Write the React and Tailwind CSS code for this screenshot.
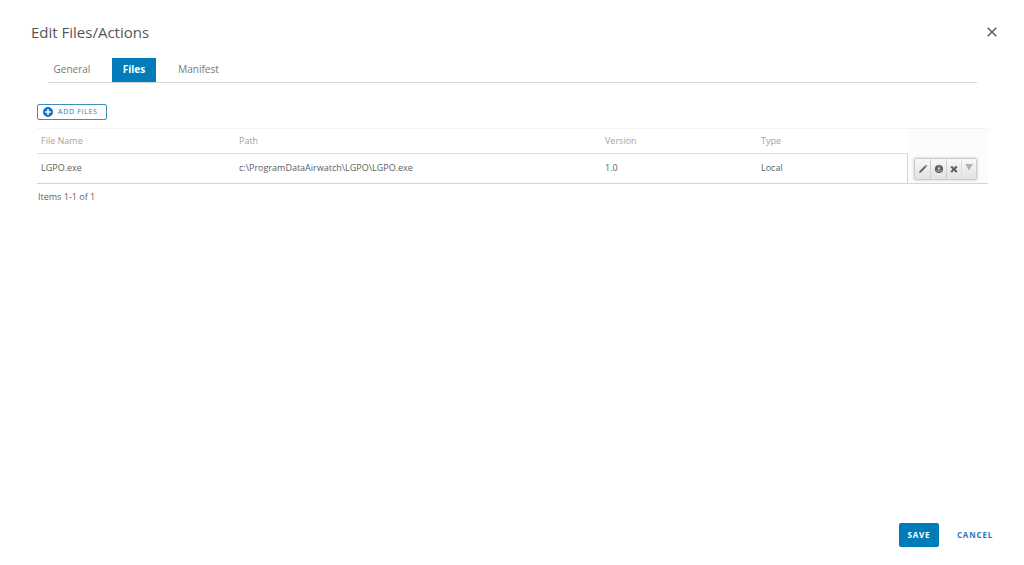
import React from 'react';

const files = [
  { name: 'LGPO.exe', path: 'c:\\ProgramDataAirwatch\\LGPO\\LGPO.exe', version: '1.0', type: 'Local' },
];

const PlusIcon = () => (
  <svg viewBox="0 0 10 10" className="h-[10px] w-[10px]" aria-hidden="true">
    <circle cx="5" cy="5" r="5" fill="#1b6fc0" />
    <path d="M5 2v6M2 5h6" stroke="#fff" strokeWidth="1.5" />
  </svg>
);

const CloseIcon = () => (
  <svg viewBox="0 0 10 10" className="h-[10px] w-[10px]" aria-hidden="true">
    <path d="M0.7 0.7L9.3 9.3M9.3 0.7L0.7 9.3" stroke="#565656" strokeWidth="1.4" fill="none" />
  </svg>
);

const PencilIcon = () => (
  <svg viewBox="0 0 10 10" className="h-[10px] w-[10px]" aria-hidden="true">
    <path d="M1 9l.6-2L6.8 1.8l1.4 1.4L3 8.4z" fill="#666" />
    <path d="M7.2 1.4l.7-.7 1.4 1.4-.7.7z" fill="#666" />
  </svg>
);

const DownloadIcon = () => (
  <svg viewBox="0 0 10 10" className="h-[10px] w-[10px]" aria-hidden="true">
    <circle cx="5" cy="5" r="4.1" fill="#5e5e5e" />
    <path d="M4.5 2.2h1v2h1.2L5 6 3.3 4.2h1.2z" fill="#ddd" />
    <path d="M2.9 6v1.1h4.2V6" stroke="#ccc" strokeWidth="0.7" fill="none" />
  </svg>
);

const DeleteIcon = () => (
  <svg viewBox="0 0 10 10" className="h-[10px] w-[10px]" aria-hidden="true">
    <path d="M2.2 2.4L7.8 8M7.8 2.4L2.2 8" stroke="#5e5e5e" strokeWidth="2.1" />
  </svg>
);

const MoreIcon = () => (
  <svg viewBox="0 0 10 10" className="h-[10px] w-[10px]" aria-hidden="true">
    <path d="M1.2 1h7.6L5 7.5z" fill="#b0b0b0" />
  </svg>
);

const RowActions = () => (
  <div className="flex h-[22px] w-[63px] rounded-xs border border-[#cccccc] bg-linear-to-b from-[#f8f8f8] to-[#e2e2e2] shadow-[0_0_3px_#c4c4c4]">
    <button type="button" aria-label="Edit" className="flex w-4 items-center justify-center border-r border-[#cfcfcf]">
      <PencilIcon />
    </button>
    <button type="button" aria-label="Download" className="flex w-4 items-center justify-center border-r border-[#cfcfcf]">
      <DownloadIcon />
    </button>
    <button type="button" aria-label="Delete" className="flex w-[15px] items-center justify-center border-r border-[#dcdcdc]">
      <DeleteIcon />
    </button>
    <button type="button" aria-label="More" className="flex flex-1 items-start justify-center pt-1">
      <MoreIcon />
    </button>
  </div>
);

const App = () => (
  <div className="flex min-h-screen flex-col bg-white font-['Open_Sans',sans-serif] text-[9px] leading-3 text-[#5c6163]">
    <header className="flex items-center justify-between pt-[22px] pr-[27px] pl-[31px]">
      <h1 className="text-[15px] leading-5 text-[#565656]">Edit Files/Actions</h1>
      <button type="button" aria-label="Close">
        <CloseIcon />
      </button>
    </header>

    <nav className="mt-4 mr-[47px] ml-12 flex h-[25px] items-stretch border-b border-[#d4d4d4] text-[10px] text-[#777777]">
      <button type="button" className="w-16 pr-4 pb-0.5">General</button>
      <button type="button" className="w-11 bg-[#007cbb] pb-0.5 font-bold text-white">Files</button>
      <button type="button" className="w-[85px] pb-0.5">Manifest</button>
    </nav>

    <main className="pt-[21px] pr-9 pl-[37px]">
      <button
        type="button"
        className="flex h-4 w-[70px] items-center gap-[5px] rounded-xs border border-[#3f8fbd] pl-[5px] text-[7px] tracking-widest whitespace-nowrap text-[#3476ad]"
      >
        <PlusIcon />
        ADD FILES
      </button>

      <table className="mt-2 w-full table-fixed border-separate border-spacing-0 text-left">
        <thead>
          <tr className="h-[26px] text-[#a3a3a3]">
            <th className="w-[198px] border-t border-b border-t-[#f3f3f3] border-b-[#dddddd] px-1 font-normal">File Name</th>
            <th className="border-t border-b border-t-[#f3f3f3] border-b-[#dddddd] px-1 font-normal">Path</th>
            <th className="w-[156px] border-t border-b border-t-[#f3f3f3] border-b-[#dddddd] px-1 font-normal">Version</th>
            <th className="w-[151px] border-t border-b border-t-[#f3f3f3] border-b-[#dddddd] px-1 font-normal">Type</th>
            <th className="w-20 border-t border-[#f3f3f3] bg-[#fbfdfb]" aria-label="Actions" />
          </tr>
        </thead>
        <tbody>
          {files.map((file) => (
            <tr key={file.name} className="h-[30px]">
              <td className="border-b border-[#d4d4d4] px-1 pb-px">{file.name}</td>
              <td className="border-b border-[#d4d4d4] px-1 pb-px">{file.path}</td>
              <td className="border-b border-[#d4d4d4] px-1 pb-px">{file.version}</td>
              <td className="border-r border-b border-[#d4d4d4] px-1 pb-px">{file.type}</td>
              <td className="border-b border-[#d4d4d4] bg-[#fbfdfb] pl-[6px]">
                <RowActions />
              </td>
            </tr>
          ))}
        </tbody>
      </table>

      <p className="mt-[7px] pl-px">Items 1-1 of 1</p>
    </main>

    <footer className="mt-auto flex items-center justify-end gap-[18px] pr-[31px] pb-[18px] text-[8px] font-bold tracking-widest">
      <button type="button" className="h-6 w-10 rounded-xs bg-[#007cbb] text-white">SAVE</button>
      <button type="button" className="text-[#2f76b5]">CANCEL</button>
    </footer>
  </div>
);

export default App;
